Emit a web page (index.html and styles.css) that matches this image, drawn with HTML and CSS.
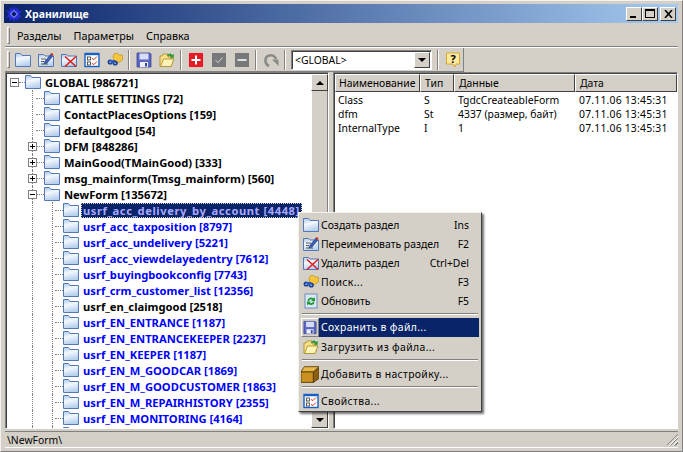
FILE: index.html
```html
<!DOCTYPE html>
<html lang="ru">
<head>
    <meta charset="UTF-8">
    <title>Хранилище</title>
    <link rel="stylesheet" href="styles.css">
</head>
<body>

<svg class="defs" width="0" height="0">
    <defs>
        <linearGradient id="folder-fill" x1="0" y1="0" x2="0.3" y2="1">
            <stop offset="0" stop-color="#a9c6ec"/>
            <stop offset="0.45" stop-color="#f4f8fd"/>
            <stop offset="1" stop-color="#b8d0ee"/>
        </linearGradient>
    </defs>
    <symbol id="i-folder" viewBox="0 0 16 16">
        <path d="M.5 4V1.500h5L7 3.500h8.500v11H.5z" fill="url(#folder-fill)" stroke="#5578b8"/>
    </symbol>
    <symbol id="i-edit" viewBox="0 0 16 16">
        <path d="M.5 4V2.500h5L7 4h8.500v10.500H.5z" fill="url(#folder-fill)" stroke="#5578b8"/>
        <path d="M3 7h5M3 9.500h3M3 12h7" stroke="#555"/>
        <path d="M6 12l1-3 6-7 2 2-6 7z" fill="#3c5fb0" stroke="#223c80" stroke-width=".6"/>
        <path d="M12.500 1.500l2-.5 1 2-1 1z" fill="#e03020"/>
    </symbol>
    <symbol id="i-delete" viewBox="0 0 16 16">
        <path d="M.5 4V2.500h5L7 4h8.500v10.500H.5z" fill="url(#folder-fill)" stroke="#5578b8"/>
        <path d="M4 4.500l11 10M15 4.500l-11 10" stroke="#e01818" stroke-width="1.500"/>
    </symbol>
    <symbol id="i-props" viewBox="0 0 16 16">
        <rect x="1" y="1.500" width="14" height="13" fill="#fff" stroke="#1560c8" stroke-width="1.400"/>
        <rect x="1" y="1" width="14" height="2.200" fill="#1560c8"/>
        <rect x="3.500" y="5" width="3" height="3" fill="#fff" stroke="#333" stroke-width=".8"/>
        <rect x="3.500" y="10" width="3" height="3" fill="#fff" stroke="#333" stroke-width=".8"/>
        <path d="M8 6.500l2 1 3-3M8 11.500l2 1 3-3" fill="none" stroke="#d03020"/>
    </symbol>
    <symbol id="i-search" viewBox="0 0 16 16">
        <path d="M6 4l1.500-2.500h3L12 3h3.500v5L11 11H7z" fill="#f5c53c" stroke="#b98a10" stroke-width=".6"/>
        <circle cx="3.200" cy="10" r="2.600" fill="#1c3f90"/>
        <circle cx="8.200" cy="11" r="2.600" fill="#1c3f90"/>
        <rect x="3" y="8" width="5" height="3" fill="#2c58b8"/>
        <circle cx="3.200" cy="10.200" r="1" fill="#7fa4e8"/>
        <circle cx="8.200" cy="11.200" r="1" fill="#7fa4e8"/>
    </symbol>
    <symbol id="i-save" viewBox="0 0 16 16">
        <path d="M1 1h13l1 1v13H1z" fill="#5c68c0" stroke="#3a4498" stroke-width=".8"/>
        <rect x="3.500" y="1.500" width="9" height="6" fill="#d8dcf4"/>
        <rect x="4" y="10" width="8" height="5" fill="#eceef8"/>
        <rect x="9" y="11" width="2" height="3.500" fill="#3a4498"/>
    </symbol>
    <symbol id="i-open" viewBox="0 0 16 16">
        <path d="M1 14.500V4h2l1-2h5v3h3v2h2.500L12 14.500z" fill="#f7e08a" stroke="#a88a20" stroke-width=".8"/>
        <path d="M1.500 14.500L4.500 7h10.500L12 14.500z" fill="#fdf2b8" stroke="#a88a20" stroke-width=".8"/>
        <path d="M8 3c2-2 4-2 5 0l2-1-.5 4-3.500-.5 1-1c-1-1-2-1-4-.5z" fill="#2f9a2f"/>
    </symbol>
    <symbol id="i-refresh" viewBox="0 0 16 16">
        <rect x="2" y="1" width="12" height="14" fill="#dce8f6" stroke="#6c8cc0"/>
        <path d="M4.500 8a3.500 3.500 0 0 1 6-2.500L12 4v4H8l1.200-1.200A2 2 0 0 0 6 8z" fill="#1f9a30"/>
        <path d="M11.500 8.500a3.500 3.500 0 0 1-6 2.500L4 12.500v-4h4l-1.200 1.200A2 2 0 0 0 10 8.500z" fill="#1f9a30"/>
    </symbol>
    <symbol id="i-box" viewBox="0 0 16 16">
        <path d="M0 6h11v9.500H0z" fill="#c98f20" stroke="#5a4008" stroke-width=".8"/>
        <path d="M11 6l5-3.500V12l-5 3.500z" fill="#8a5f10" stroke="#5a4008" stroke-width=".8"/>
        <path d="M0 6l3-4.500h13L11 6z" fill="#e8b848" stroke="#5a4008" stroke-width=".8"/>
    </symbol>
</svg>

<div class="window">
    <div class="titlebar">
        <svg class="title-icon" viewBox="0 0 16 16">
            <path d="M8 0l1.500 3.500L12.500 1l-.5 4 4 -.5L13 8l3 3.500-4-.5.500 4-3-2.500L8 16l-1.500-3.500L3.500 15l.5-4-4 .5L3 8 0 4.500l4 .5-.5-4 3 2.500z" fill="#2a2ae0"/>
            <path d="M8 4.500L11.500 8 8 11.500 4.500 8z" fill="#0a1a70" stroke="#9cc0ff"/>
        </svg>
        <span class="title-text">Хранилище</span>
        <div class="title-btns">
            <button class="cap-btn"><i class="cap-min"></i></button>
            <button class="cap-btn"><i class="cap-max"></i></button>
            <button class="cap-btn cap-close">
                <svg viewBox="0 0 9 8" width="9" height="8"><path d="M1 0l7 8M8 0L1 8" fill="none" stroke="#000" stroke-width="1.600"/></svg>
            </button>
        </div>
    </div>

    <div class="menubar">
        <i class="grip"></i>
        <a>Разделы</a>
        <a>Параметры</a>
        <a>Справка</a>
    </div>

    <div class="toolbar-row">
        <div class="toolbar">
            <i class="grip"></i>
            <span class="tool"><svg><use href="#i-folder"/></svg></span>
            <span class="tool"><svg><use href="#i-edit"/></svg></span>
            <span class="tool"><svg><use href="#i-delete"/></svg></span>
            <span class="tool"><svg><use href="#i-props"/></svg></span>
            <span class="tool"><svg><use href="#i-search"/></svg></span>
            <i class="tool-sep"></i>
            <span class="tool"><svg><use href="#i-save"/></svg></span>
            <span class="tool"><svg><use href="#i-open"/></svg></span>
            <i class="tool-sep"></i>
            <span class="tool">
                <svg viewBox="0 0 16 16"><rect x=".5" y=".5" width="15" height="15" rx="1.500" fill="#e01c24" stroke="#f4c0c0"/><path d="M8 3.500v9M3.500 8h9" stroke="#fff" stroke-width="2"/></svg>
            </span>
            <span class="tool">
                <svg viewBox="0 0 16 16"><rect x="1" y="1" width="14" height="14" fill="#77787a"/><path d="M4.500 8l2.500 2.500 4.500-5" fill="none" stroke="#d8d8d8"/></svg>
            </span>
            <span class="tool">
                <svg viewBox="0 0 16 16"><rect x="1" y="1" width="14" height="14" fill="#77787a"/><path d="M3.500 8h9" stroke="#e0e0e0" stroke-width="2"/></svg>
            </span>
            <i class="tool-sep"></i>
            <span class="tool">
                <svg viewBox="0 0 16 16"><path d="M6 14C1.500 12.500 1 5 6 3.500c3-.8 6 .5 7 3.500" fill="none" stroke="#8a8a86" stroke-width="2.600"/><path d="M9 7.500h6.500V14z" fill="#8a8a86"/></svg>
            </span>
            <i class="tool-sep"></i>
            <div class="combo">
                <span class="combo-text">&lt;GLOBAL&gt;</span>
                <button class="combo-btn"><i class="arrow-down"></i></button>
            </div>
            <i class="tool-sep"></i>
            <span class="tool">
                <svg viewBox="0 0 16 16"><path d="M1.500 1h13v11H11l-1 3-2-3H1.500z" fill="#fdeaa0" stroke="#d8a830"/><text x="8" y="10.500" class="help-mark">?</text></svg>
            </span>
        </div>
    </div>

    <div class="panes">
        <div class="tree-pane">
            <div class="tree">
                <div class="node root"><i class="exp"><b class="minus"></b></i><i class="dash"></i><svg class="folder"><use href="#i-folder"/></svg><span class="label">GLOBAL [986721]</span></div>
                <div class="node l1"><i class="dash"></i><svg class="folder"><use href="#i-folder"/></svg><span class="label">CATTLE SETTINGS [72]</span></div>
                <div class="node l1"><i class="dash"></i><svg class="folder"><use href="#i-folder"/></svg><span class="label">ContactPlacesOptions [159]</span></div>
                <div class="node l1"><i class="dash"></i><svg class="folder"><use href="#i-folder"/></svg><span class="label">defaultgood [54]</span></div>
                <div class="node l1"><i class="exp"><b class="plus"></b></i><i class="dash"></i><svg class="folder"><use href="#i-folder"/></svg><span class="label">DFM [848286]</span></div>
                <div class="node l1"><i class="exp"><b class="plus"></b></i><i class="dash"></i><svg class="folder"><use href="#i-folder"/></svg><span class="label">MainGood(TMainGood) [333]</span></div>
                <div class="node l1"><i class="exp"><b class="plus"></b></i><i class="dash"></i><svg class="folder"><use href="#i-folder"/></svg><span class="label">msg_mainform(Tmsg_mainform) [560]</span></div>
                <div class="node l1"><i class="exp"><b class="minus"></b></i><i class="dash"></i><svg class="folder"><use href="#i-folder"/></svg><span class="label">NewForm [135672]</span></div>
                <div class="node l2 blue selected"><i class="dash"></i><svg class="folder"><use href="#i-folder"/></svg><span class="label">usrf_acc_delivery_by_account [4448]</span></div>
                <div class="node l2 blue"><i class="dash"></i><svg class="folder"><use href="#i-folder"/></svg><span class="label">usrf_acc_taxposition [8797]</span></div>
                <div class="node l2 blue"><i class="dash"></i><svg class="folder"><use href="#i-folder"/></svg><span class="label">usrf_acc_undelivery [5221]</span></div>
                <div class="node l2 blue"><i class="dash"></i><svg class="folder"><use href="#i-folder"/></svg><span class="label">usrf_acc_viewdelayedentry [7612]</span></div>
                <div class="node l2 blue"><i class="dash"></i><svg class="folder"><use href="#i-folder"/></svg><span class="label">usrf_buyingbookconfig [7743]</span></div>
                <div class="node l2 blue"><i class="dash"></i><svg class="folder"><use href="#i-folder"/></svg><span class="label">usrf_crm_customer_list [12356]</span></div>
                <div class="node l2"><i class="dash"></i><svg class="folder"><use href="#i-folder"/></svg><span class="label">usrf_en_claimgood [2518]</span></div>
                <div class="node l2 blue"><i class="dash"></i><svg class="folder"><use href="#i-folder"/></svg><span class="label">usrf_EN_ENTRANCE [1187]</span></div>
                <div class="node l2 blue"><i class="dash"></i><svg class="folder"><use href="#i-folder"/></svg><span class="label">usrf_EN_ENTRANCEKEEPER [2237]</span></div>
                <div class="node l2 blue"><i class="dash"></i><svg class="folder"><use href="#i-folder"/></svg><span class="label">usrf_EN_KEEPER [1187]</span></div>
                <div class="node l2 blue"><i class="dash"></i><svg class="folder"><use href="#i-folder"/></svg><span class="label">usrf_EN_M_GOODCAR [1869]</span></div>
                <div class="node l2 blue"><i class="dash"></i><svg class="folder"><use href="#i-folder"/></svg><span class="label">usrf_EN_M_GOODCUSTOMER [1863]</span></div>
                <div class="node l2 blue"><i class="dash"></i><svg class="folder"><use href="#i-folder"/></svg><span class="label">usrf_EN_M_REPAIRHISTORY [2355]</span></div>
                <div class="node l2 blue"><i class="dash"></i><svg class="folder"><use href="#i-folder"/></svg><span class="label">usrf_EN_MONITORING [4164]</span></div>
                <div class="node l2 blue"><i class="dash"></i><svg class="folder"><use href="#i-folder"/></svg></div>
            </div>
            <div class="scrollbar">
                <button class="sb-btn"><i class="arrow-up"></i></button>
                <div class="sb-track"></div>
                <button class="sb-btn"><i class="arrow-down"></i></button>
            </div>
        </div>

        <div class="list-pane">
            <div class="list-row list-head">
                <span>Наименование</span>
                <span>Тип</span>
                <span>Данные</span>
                <span>Дата</span>
            </div>
            <div class="list-body">
                <div class="list-row"><span>Class</span><span>S</span><span>TgdcCreateableForm</span><span class="date">07.11.06 13:45:31</span></div>
                <div class="list-row"><span>dfm</span><span>St</span><span>4337 (размер, байт)</span><span class="date">07.11.06 13:45:31</span></div>
                <div class="list-row"><span>InternalType</span><span>I</span><span>1</span><span class="date">07.11.06 13:45:31</span></div>
            </div>
        </div>
    </div>

    <div class="statusbar">
        <span>\NewForm\</span>
        <i class="size-grip"></i>
    </div>

    <!-- контекстное меню поверх дерева -->
    <div class="popup">
        <div class="item"><svg><use href="#i-folder"/></svg><span>Создать раздел</span><em>Ins</em></div>
        <div class="item"><svg><use href="#i-edit"/></svg><span>Переименовать раздел</span><em>F2</em></div>
        <div class="item"><svg><use href="#i-delete"/></svg><span>Удалить раздел</span><em>Ctrl+Del</em></div>
        <div class="item wide"><svg><use href="#i-search"/></svg><span>Поиск...</span><em>F3</em></div>
        <div class="item"><svg><use href="#i-refresh"/></svg><span>Обновить</span><em>F5</em></div>
        <div class="sep"></div>
        <div class="item hot wide"><svg><use href="#i-save"/></svg><span>Сохранить в файл...</span></div>
        <div class="item wide"><svg><use href="#i-open"/></svg><span>Загрузить из файла...</span></div>
        <div class="sep"></div>
        <div class="item wide"><svg class="big"><use href="#i-box"/></svg><span>Добавить в настройку...</span></div>
        <div class="sep"></div>
        <div class="item wide"><svg><use href="#i-props"/></svg><span>Свойства...</span></div>
    </div>
</div>

</body>
</html>
```

FILE: styles.css
```css
* {
    box-sizing: border-box;
}

body {
    margin: 0;
    background-color: #d4d0c8;
    font-family: "Noto Sans", "DejaVu Sans", sans-serif;
    font-size: 10.4px;
    color: #000;
}

.defs {
    position: absolute;
}

i, em {
    display: block;
    font-style: normal;
}

button {
    padding: 0;
    background-color: #d4d0c8;
}

/* окно */
.window {
    position: relative;
    width: 683px;
    height: 452px;
    padding: 4px 4px 3px;
    display: flex;
    flex-direction: column;
    border: 1px solid #808080;
    border-top-color: #f4f2ee;
    border-left-color: #f4f2ee;
    overflow: hidden;
}

.titlebar {
    flex: none;
    height: 19px;
    margin: -1px 0 0 -1px;
    padding: 0 2px 0 2px;
    display: flex;
    align-items: center;
    background: linear-gradient(to right, #0a246a, #a6caf0);
    color: #fff;
}

.title-icon {
    width: 16px;
    height: 16px;
    margin-right: 3px;
}

.title-text {
    font-size: 10.5px;
    font-weight: bold;
}

.title-btns {
    margin-left: auto;
    display: flex;
}

.cap-btn {
    width: 16px;
    height: 14px;
    display: flex;
    align-items: center;
    justify-content: center;
    border: 1px solid;
    border-color: #fff #404040 #404040 #fff;
}

.cap-close {
    margin-left: 2px;
}

.cap-min {
    width: 6px;
    height: 2px;
    margin: 7px 3px 0 0;
    background-color: #000;
}

.cap-max {
    width: 10px;
    height: 9px;
    border: 1px solid #000;
    border-top-width: 2px;
}

.menubar {
    flex: none;
    height: 23px;
    margin-top: 1px;
    display: flex;
    align-items: center;
    border-bottom: 1px solid #808080;
}

.menubar a {
    padding: 0 6px;
    font-size: 10.8px;
}

.grip {
    width: 3px;
    height: 17px;
    flex: none;
    margin: 0 1px 0 2px;
    border: 1px solid;
    border-color: #fff #808080 #808080 #fff;
}

.toolbar-row {
    flex: none;
    height: 25px;
    border-top: 1px solid #fff;
}

.toolbar {
    width: 459px;
    height: 24px;
    display: flex;
    align-items: center;
    border-right: 1px solid #808080;
    border-bottom: 1px solid #808080;
}

.tool {
    width: 23px;
    height: 22px;
    flex: none;
    display: flex;
    align-items: center;
    justify-content: center;
}

.tool svg {
    width: 16px;
    height: 16px;
}

.tool-sep {
    width: 2px;
    height: 20px;
    flex: none;
    margin: 0 2px;
    border-left: 1px solid #808080;
    border-right: 1px solid #fff;
}

.help-mark {
    font-size: 11px;
    font-weight: bold;
    text-anchor: middle;
}

.combo {
    width: 141px;
    height: 20px;
    flex: none;
    margin: 0 3px;
    display: flex;
    align-items: center;
    background-color: #fff;
    border: 1px solid;
    border-color: #808080 #fff #fff #808080;
    box-shadow: inset 1px 1px 0 #404040;
}

.combo-text {
    flex: 1;
    padding-left: 3px;
}

.combo-btn {
    width: 16px;
    height: 16px;
    margin-right: 1px;
    display: flex;
    align-items: center;
    justify-content: center;
    border: 1px solid;
    border-color: #fff #404040 #404040 #fff;
}

.arrow-down {
    border: 4px solid transparent;
    border-top-color: #000;
    border-bottom-width: 0;
}

.arrow-up {
    border: 4px solid transparent;
    border-bottom-color: #000;
    border-top-width: 0;
}

/* дерево и список */
.panes {
    flex: 1;
    min-height: 0;
    display: flex;
    gap: 4px;
}

.tree-pane {
    width: 324px;
    display: flex;
    background-color: #fff;
    border: 1px solid;
    border-color: #808080 #fff #fff #808080;
    box-shadow: inset 1px 1px 0 #404040;
}

.tree {
    flex: 1;
    min-width: 0;
    padding-top: 1px;
    overflow: hidden;
}

.node {
    position: relative;
    height: 16px;
    display: flex;
    align-items: center;
    font-size: 11.2px;
    font-weight: bold;
    white-space: nowrap;
}

.node .folder {
    width: 16px;
    height: 16px;
    flex: none;
}

.node .dash {
    width: 8px;
    border-top: 1px dotted #808080;
    flex: none;
}

.node .label {
    margin-left: 2px;
    padding: 0 2px;
    line-height: 15px;
}

.root {
    padding-left: 4px;
}

.root .dash {
    width: 6px;
}

.exp {
    position: relative;
    z-index: 1;
    width: 9px;
    height: 9px;
    flex: none;
    border: 1px solid #808080;
    background-color: #fff;
}

.exp b {
    position: absolute;
    left: 1px;
    top: 3px;
    width: 5px;
    height: 1px;
    background-color: #000;
}

.exp .plus::after {
    content: "";
    position: absolute;
    left: 2px;
    top: -2px;
    width: 1px;
    height: 5px;
    background-color: #000;
}

.l1 {
    padding-left: 30px;
}

.l1:has(.exp) {
    padding-left: 22px;
}

.l1:has(.exp) .dash {
    width: 7px;
}

.l2 {
    padding-left: 49px;
}

/* вертикальные пунктирные линии дерева */
.l1::before,
.l2::before {
    content: "";
    position: absolute;
    left: 26px;
    top: 0;
    bottom: 0;
    border-left: 1px dotted #808080;
}

.l2::after {
    content: "";
    position: absolute;
    left: 46px;
    top: 0;
    bottom: 0;
    border-left: 1px dotted #808080;
}

.blue {
    color: #0000ff;
}

.selected .label {
    background-color: #0a246a;
    color: #a8a8ff;
    letter-spacing: 0.55px;
    outline: 1px dotted #d4d0c8;
    outline-offset: -1px;
}

.scrollbar {
    width: 17px;
    flex: none;
    display: flex;
    flex-direction: column;
    margin: 1px 0 0;
    background-color: #d4d0c8;
}

.sb-btn {
    width: 17px;
    height: 17px;
    flex: none;
    display: flex;
    align-items: center;
    justify-content: center;
    border: 1px solid;
    border-color: #fff #404040 #404040 #fff;
}

.sb-track {
    flex: 1;
    background-color: #d4d0c8;
    border-left: 1px solid #fff;
    border-right: 1px solid #808080;
}

.list-pane {
    flex: 1;
    min-width: 0;
    display: flex;
    flex-direction: column;
    background-color: #fff;
    border: 1px solid;
    border-color: #808080 #fff #fff #808080;
    box-shadow: inset 1px 1px 0 #404040;
    padding: 1px 0 0 1px;
}

.list-row {
    display: grid;
    grid-template-columns: 85px 34px 121px 1fr;
    height: 14px;
    line-height: 14px;
    white-space: nowrap;
}

.list-row span {
    padding-left: 4px;
}

.list-row span:first-child {
    padding-left: 3px;
}

.list-row .date {
    letter-spacing: 0.2px;
}

.list-head {
    height: 18px;
    line-height: 16px;
    flex: none;
}

.list-head span {
    background-color: #d4d0c8;
    border: 1px solid;
    border-color: #fff #404040 #404040 #fff;
}

.list-body {
    padding-top: 1px;
}

/* строка состояния */
.statusbar {
    flex: none;
    height: 17px;
    margin-top: 2px;
    padding-left: 2px;
    display: flex;
    align-items: center;
    justify-content: space-between;
    border-top: 1px solid #808080;
    border-bottom: 1px solid #fff;
}

.size-grip {
    width: 12px;
    height: 12px;
    background: repeating-linear-gradient(135deg, #d4d0c8 0 1px, #fff 1px 2px, #808080 2px 3px);
    clip-path: polygon(100% 0, 100% 100%, 0 100%);
}

/* контекстное меню */
.popup {
    position: absolute;
    left: 297px;
    top: 211px;
    width: 184px;
    padding: 2px 2px 1px;
    background-color: #d4d0c8;
    border: 1px solid;
    border-color: #f4f2ee #404040 #404040 #f4f2ee;
    box-shadow: 2px 2px 2px rgba(0,0,0,0.55);
}

.item {
    height: 19px;
    display: flex;
    align-items: center;
    padding-right: 10px;
}

.item svg {
    width: 16px;
    height: 16px;
    margin: 0 2px 0 2px;
    flex: none;
}

.item svg.big {
    width: 18px;
    height: 18px;
    margin: 0 2px 0 0;
}

.item span {
    flex: 1;
}

.wide span {
    letter-spacing: 0.35px;
}

.hot {
    padding-right: 0;
}

.hot svg {
    width: 18px;
    height: 19px;
    margin: 0;
    padding: 1px;
    background-color: #d4d0c8;
    border: 1px solid;
    border-color: #fff #808080 #808080 #fff;
}

.hot span {
    height: 19px;
    line-height: 18px;
    padding-left: 2px;
    background-color: #0a246a;
    color: #fff;
}

.sep {
    height: 2px;
    margin: 3px 1px;
    border-top: 1px solid #808080;
    border-bottom: 1px solid #fff;
}
```
